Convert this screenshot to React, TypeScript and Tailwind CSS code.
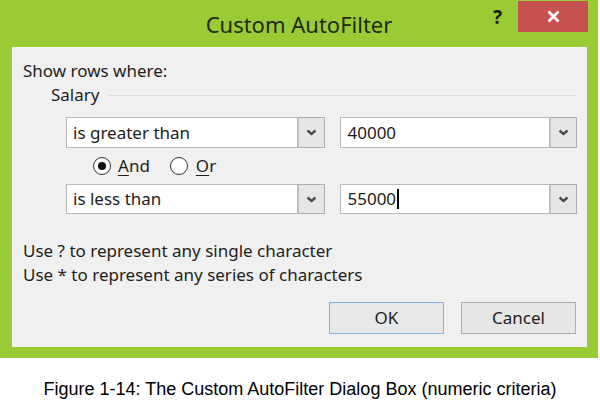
import React from "react";

const Chevron = () => (
  <svg width="11" height="7" viewBox="0 0 11 7" className="block">
    <polyline points="1.5,1.5 5.5,5 9.5,1.5" fill="none" stroke="#4a4a4a" strokeWidth="2.4" />
  </svg>
);

const Combo = ({ value, width, caret }: { value: string; width: string; caret?: boolean }) => (
  <div className={`flex h-full ${width}`}>
    <div className="flex-1 flex items-center bg-white border border-[#b9b9b9] pl-[6px] text-[17px] text-[#1c1c1c]">
      <span>{value}</span>
      {caret && <span className="inline-block w-[1.5px] h-[20px] bg-black ml-[1px]" />}
    </div>
    <div className="w-[27px] flex items-center justify-center bg-[#e6e6e6] border border-[#adadad] border-l-[#c4c4c4]">
      <Chevron />
    </div>
  </div>
);

const Radio = ({ checked }: { checked?: boolean }) => (
  <div className="w-[18px] h-[18px] rounded-full border border-[#333] bg-white flex items-center justify-center">
    {checked && <div className="w-[8px] h-[8px] rounded-full bg-[#111]" />}
  </div>
);

export default function App() {
  return (
    <div className="w-[600px] h-[410px] bg-white flex flex-col" style={{ fontFamily: '"Noto Sans", "Open Sans", sans-serif' }}>
      <div className="w-[598px] h-[358px] bg-[#9acb34] flex flex-col pl-[12px] pr-[11px] pb-[11px]">
        {/* title bar */}
        <div className="h-[47px] grid grid-cols-[1fr_auto_1fr] -mr-[11px] -ml-[12px]">
          <div />
          <div className="pt-[9px] text-[22px] leading-[30px] text-[#1f2a12]">Custom AutoFilter</div>
          <div className="flex justify-end items-start">
            <div className="mt-[6px] mr-[16px] text-[19px] font-bold leading-[22px] text-[#1a1a1a]">?</div>
            <div className="mt-[1px] mr-[10px] w-[70px] h-[31px] bg-[#c75050] flex items-center justify-center">
              <svg width="13" height="13" viewBox="0 0 13 13">
                <path d="M1.5 1.5 L11.5 11.5 M11.5 1.5 L1.5 11.5" stroke="#fff" strokeWidth="2.6" />
              </svg>
            </div>
          </div>
        </div>
        {/* panel */}
        <div className="flex-1 bg-[#f0f0f0] border-t border-l border-[#f6f6f6] flex flex-col pl-[10px] pr-[10px] text-[17px] text-[#1e1e1e]">
          <div className="mt-[11px] h-[24px] leading-[24px]">Show rows where:</div>
          <div className="h-[24px] flex items-center pl-[28px]">
            <span className="leading-[24px]">Salary</span>
            <div className="flex-1 h-px bg-[#dcdcdc] ml-[10px]" />
          </div>
          <div className="mt-[10px] h-[31px] flex pl-[43px]">
            <Combo value="is greater than" width="w-[260px]" />
            <div className="w-[15px]" />
            <Combo value="40000" width="w-[237px]" />
          </div>
          <div className="h-[36px] flex items-center pl-[70px]">
            <Radio checked />
            <span className="ml-[7px] leading-[20px]"><span className="underline underline-offset-[3px]">A</span>nd</span>
            <div className="ml-[20px]"><Radio /></div>
            <span className="ml-[8px] leading-[20px]"><span className="underline underline-offset-[3px]">O</span>r</span>
          </div>
          <div className="h-[30px] flex pl-[43px]">
            <Combo value="is less than" width="w-[260px]" />
            <div className="w-[15px]" />
            <Combo value="55000" width="w-[237px]" caret />
          </div>
          <div className="mt-[25px] leading-[24px]">Use ? to represent any single character</div>
          <div className="leading-[24px]">Use * to represent any series of characters</div>
          <div className="mt-[15px] flex justify-end gap-[17px] pr-[1px]">
            <div className="w-[115px] h-[32px] border border-[#7fb2e5] bg-[#e8e8e8] flex items-center justify-center">OK</div>
            <div className="w-[115px] h-[32px] border border-[#adadad] bg-[#e6e6e6] flex items-center justify-center">Cancel</div>
          </div>
        </div>
      </div>
      <div className="mt-[20px] text-center text-[18px] leading-[22px] text-black" style={{ fontFamily: '"Liberation Sans", Arial, sans-serif' }}>
        Figure 1-14: The Custom AutoFilter Dialog Box (numeric criteria)
      </div>
    </div>
  );
}
